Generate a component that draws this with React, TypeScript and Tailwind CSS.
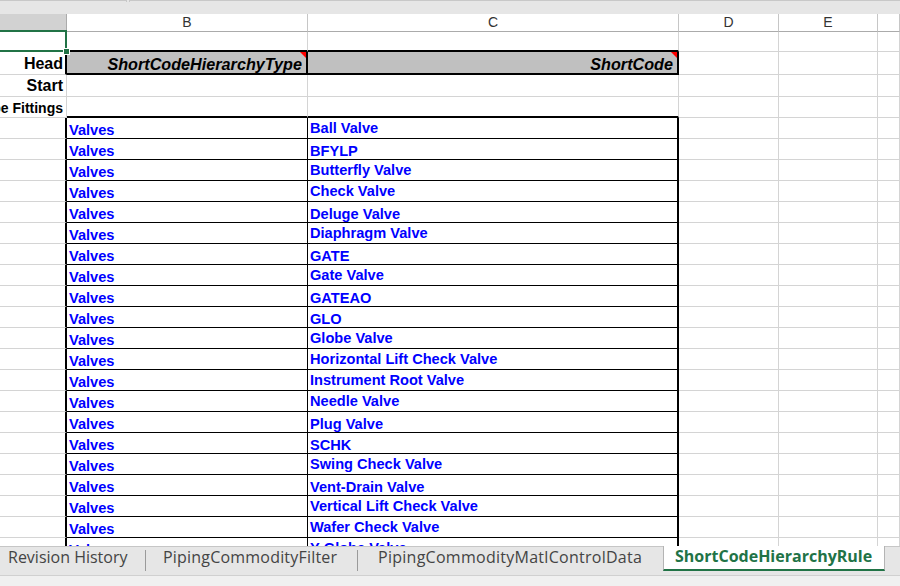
import React from 'react';
import clsx from 'clsx';

// gridline / border presets for cell edges
const GRID_R = 'border-r border-r-[#d4d4d4]';
const GRID_B = 'border-b border-b-[#d4d4d4]';
const THIN_R = 'border-r border-r-black';
const THIN_B = 'border-b border-b-black';
const THICK_R = 'border-r-2 border-r-black';
const THICK_B = 'border-b-2 border-b-black';

const W = {
  A: 'w-[67px]',
  B: 'w-[241px]',
  C: 'w-[371px]',
  D: 'w-[100px]',
  E: 'w-[99px]',
};

// [short code, sits a bit higher in the cell]
const shortCodes: [string, boolean][] = [
  ['Ball Valve', true],
  ['BFYLP', false],
  ['Butterfly Valve', true],
  ['Check Valve', true],
  ['Deluge Valve', false],
  ['Diaphragm Valve', true],
  ['GATE', false],
  ['Gate Valve', true],
  ['GATEAO', false],
  ['GLO', false],
  ['Globe Valve', true],
  ['Horizontal Lift Check Valve', true],
  ['Instrument Root Valve', true],
  ['Needle Valve', true],
  ['Plug Valve', false],
  ['SCHK', false],
  ['Swing Check Valve', true],
  ['Vent-Drain Valve', false],
  ['Vertical Lift Check Valve', true],
  ['Wafer Check Valve', true],
  ['Y-Globe Valve', true],
];

type CellProps = {
  w?: string;
  r?: string;
  b?: string;
  className?: string;
  children?: React.ReactNode;
};

function Cell({ w, r = GRID_R, b = GRID_B, className, children }: CellProps) {
  return (
    <div className={clsx('box-border flex h-full', w ?? 'flex-1', w && 'shrink-0', r, b, className)}>
      {children}
    </div>
  );
}

function Row({ h, children }: { h: string; children: React.ReactNode }) {
  return <div className={clsx('flex shrink-0', h)}>{children}</div>;
}

function CommentMark() {
  return (
    <svg className="absolute right-0 top-0" width="6" height="6" viewBox="0 0 6 6">
      <polygon points="0,0 6,0 6,6" fill="#ff0000" />
    </svg>
  );
}

function ColumnHeaders() {
  const letters: [string, string | undefined][] = [
    ['B', W.B],
    ['C', W.C],
    ['D', W.D],
    ['E', W.E],
    ['', undefined],
  ];
  return (
    <Row h="h-[18px]">
      <Cell w={W.A} r="border-r border-r-[#ababab]" b="border-b border-b-[#ababab]" className="bg-[#d2d2d2]" />
      {letters.map(([l, w], i) => (
        <Cell
          key={i}
          w={w}
          r="border-r border-r-[#c6c6c6]"
          b="border-b border-b-[#ababab]"
          className="items-center justify-center text-[14px] text-[#333]"
        >
          {l}
        </Cell>
      ))}
    </Row>
  );
}

function Tail() {
  return (
    <>
      <Cell w={W.D} />
      <Cell w={W.E} />
      <Cell />
    </>
  );
}

const dataText = 'items-end whitespace-nowrap pl-[2px] text-[14.6px] font-bold leading-[14px] text-[#0000ff]';
const titleText = 'relative items-end justify-end bg-[#c0c0c0] pb-[1px] pr-[4px] text-[16.2px] font-bold italic leading-[16px]';

function Sheet() {
  return (
    <div className="h-[546px] shrink-0 overflow-hidden bg-white font-['Liberation_Sans',Arial,sans-serif]">
      {/* strip under the formula bar */}
      <div className="flex h-[14px] items-start bg-[#e6e6e6]">
        <div className="h-[2px] w-[127px] border-r border-t border-[#c8c8c8]" />
        <div className="w-[2px]" />
        <div className="h-[2px] flex-1 border-l border-t border-[#c8c8c8]" />
      </div>

      <ColumnHeaders />

      {/* row 1, A1 selected */}
      <Row h="h-[20px]">
        <Cell w={W.A} className="relative">
          <div className="absolute -left-[2px] -right-[1px] -top-[2px] z-10 h-[22px] border-2 border-[#217346]" />
          <div className="absolute left-[63px] top-[16px] z-10 h-[7px] w-[7px] border border-white bg-[#217346]" />
        </Cell>
        <Cell w={W.B} b={THICK_B} />
        <Cell w={W.C} b={THICK_B} />
        <Tail />
      </Row>

      {/* row 2, column titles */}
      <Row h="h-[23px]">
        <Cell w={W.A} r={THICK_R} className="items-end justify-end whitespace-nowrap pb-[2px] pr-[2px] text-[16px] font-bold leading-[16px]">
          Head
        </Cell>
        <Cell w={W.B} r={THICK_R} b={THICK_B} className={titleText}>
          ShortCodeHierarchyType
          <CommentMark />
        </Cell>
        <Cell w={W.C} r={THICK_R} b={THICK_B} className={titleText}>
          ShortCode
          <CommentMark />
        </Cell>
        <Tail />
      </Row>

      <Row h="h-[22px]">
        <Cell w={W.A} className="items-end justify-end whitespace-nowrap pb-[2px] pr-[3px] text-[16px] font-bold leading-[16px]">
          Start
        </Cell>
        <Cell w={W.B} />
        <Cell w={W.C} />
        <Tail />
      </Row>

      <Row h="h-[21px]">
        <Cell w={W.A} className="items-end justify-end whitespace-nowrap pb-[2px] pr-[3px] text-[14px] font-bold leading-[14px]">
          Pipe Fittings
        </Cell>
        <Cell w={W.B} b={THICK_B} />
        <Cell w={W.C} b={THICK_B} />
        <Tail />
      </Row>

      {shortCodes.map(([code, high]) => (
        <Row key={code} h="h-[21px]">
          <Cell w={W.A} r={THICK_R} />
          <Cell w={W.B} r={THIN_R} b={THIN_B} className={clsx(dataText, 'pb-[1px]')}>
            Valves
          </Cell>
          <Cell w={W.C} r={THICK_R} b={THIN_B} className={clsx(dataText, high ? 'pb-[3px]' : 'pb-[1px]')}>
            {code}
          </Cell>
          <Tail />
        </Row>
      ))}
    </div>
  );
}

function SheetTabs() {
  return (
    <div className="flex h-[40px] shrink-0 flex-col bg-[#e6e6e6] font-['Open_Sans',sans-serif] text-[16px]">
      <div className="flex h-[29px] items-start">
        <div className="flex h-full w-[663px] shrink-0 items-start border-t border-[#c6c6c6] text-[#444]">
          <div className="w-[145px] shrink-0 whitespace-nowrap pl-[8px] leading-[21px]">Revision History</div>
          <div className="mt-[3px] h-[21px] w-px shrink-0 bg-[#9a9a9a]" />
          <div className="w-[211px] shrink-0 whitespace-nowrap pl-[17px] leading-[21px] tracking-[0.2px]">PipingCommodityFilter</div>
          <div className="mt-[3px] h-[21px] w-px shrink-0 bg-[#9a9a9a]" />
          <div className="flex-1 whitespace-nowrap pl-[20px] leading-[21px] tracking-[0.27px]">PipingCommodityMatlControlData</div>
        </div>
        <div className="box-border h-[25px] w-[222px] shrink-0 whitespace-nowrap border-x border-b-2 border-x-[#b4b4b4] border-b-[#217346] bg-white pl-[11px] font-bold leading-[21px] text-[#217346]">
          ShortCodeHierarchyRule
        </div>
        <div className="h-full flex-1 border-t border-[#c6c6c6]" />
      </div>
      <div className="h-[11px] border-t border-[#d0d0d0] bg-[#f0f0f0]" />
    </div>
  );
}

export default function App() {
  return (
    <div className="flex h-[586px] w-[900px] flex-col overflow-hidden bg-white">
      <Sheet />
      <SheetTabs />
    </div>
  );
}
